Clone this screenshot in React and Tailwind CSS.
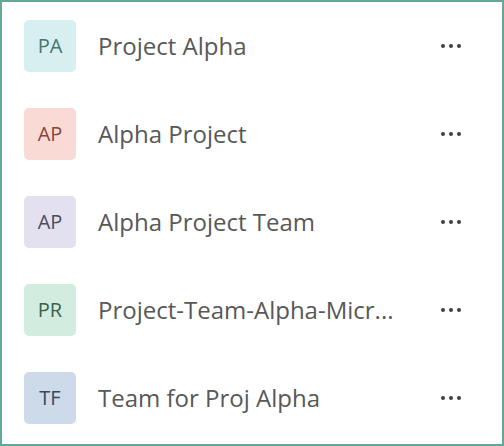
// 팀 목록 — 긴 이름은 화면에 보이는 대로 줄여서 표시
const TEAMS = [
  { initials: 'PA', name: 'Project Alpha', bg: 'bg-[#d8eff1]', fg: 'text-[#47766f]' },
  { initials: 'AP', name: 'Alpha Project', bg: 'bg-[#fadad5]', fg: 'text-[#86463c]' },
  { initials: 'AP', name: 'Alpha Project Team', bg: 'bg-[#e3e0f0]', fg: 'text-[#4c4c5c]' },
  { initials: 'PR', name: 'Project-Team-Alpha-Micr...', bg: 'bg-[#d2ece0]', fg: 'text-[#3a624e]' },
  { initials: 'TF', name: 'Team for Proj Alpha', bg: 'bg-[#ccdaea]', fg: 'text-[#38485c]' },
]

function Dots() {
  return (
    <span className="flex items-center gap-[4px] w-[24px]">
      <span className="w-[4px] h-[4px] rounded-full bg-[#404040]" />
      <span className="w-[4px] h-[4px] rounded-full bg-[#404040]" />
      <span className="w-[4px] h-[4px] rounded-full bg-[#404040]" />
    </span>
  )
}

function TeamRow({ team }) {
  return (
    <div className="h-[88px] flex items-center pl-[22px] pr-[37px]">
      <div className={`w-[52px] h-[52px] rounded-[5px] flex items-center justify-center text-[20px] ${team.bg} ${team.fg}`}>
        {team.initials}
      </div>
      <span className="ml-[22px] whitespace-nowrap text-[24px] text-[#585858]">
        {team.name}
      </span>
      <span className="ml-auto">
        <Dots />
      </span>
    </div>
  )
}

export default function App() {
  return (
    <div
      className="w-[504px] h-[446px] bg-white border-2 border-[#62a898] flex flex-col"
      style={{ fontFamily: '"Open Sans", "Noto Sans", sans-serif' }}
    >
      {TEAMS.map((t, i) => (
        <TeamRow key={i} team={t} />
      ))}
    </div>
  )
}
